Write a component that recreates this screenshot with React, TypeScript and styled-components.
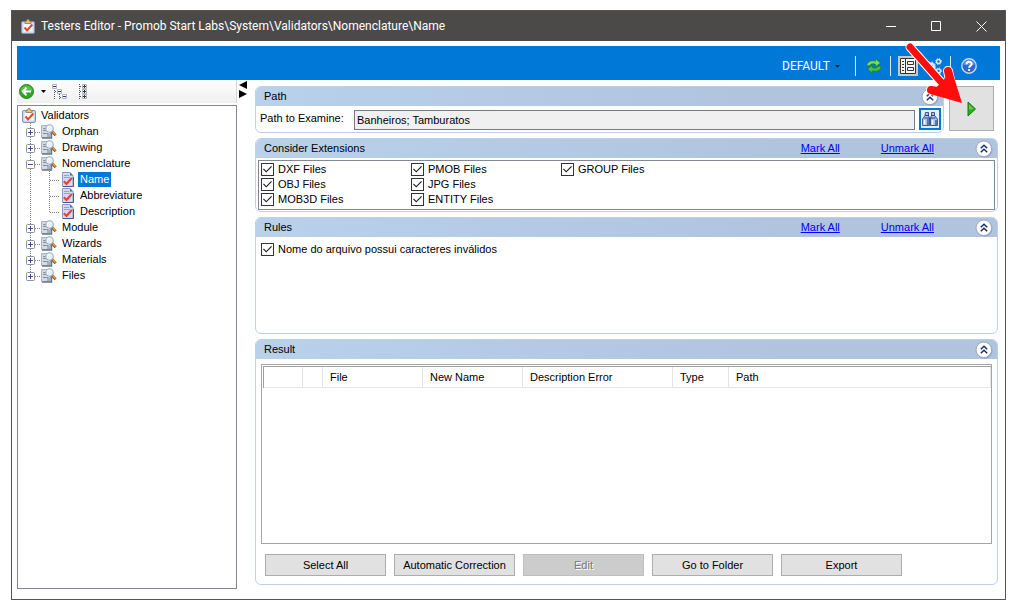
import React from "react";
import styled, { createGlobalStyle } from "styled-components";

const GlobalStyle = createGlobalStyle`
  * { box-sizing: border-box; }
  html, body { margin: 0; background: #fff; }
  body, button, input, select, table {
    font-family: "Liberation Sans", Arial, sans-serif;
    font-size: 11px;
    line-height: 15px;
    color: #000;
  }
  button { padding: 0; border: 0; background: none; }
  svg { display: block; flex: none; }
`;

const Page = styled.div`
  display: flex;
  min-height: 100vh;
  padding: 10px 19px 14px 11px;
`;

const Window = styled.main`
  position: relative;
  flex: 1;
  min-width: 0;
  display: flex;
  flex-direction: column;
  border: 1px solid #555;
  background: #fff;
`;

const TitleBar = styled.header`
  display: flex;
  align-items: center;
  height: 30px;
  padding: 0 15px 0 9px;
  gap: 6px;
  background: #4c4a48;
`;

const Title = styled.h1`
  flex: 1;
  margin: 0;
  font: 400 12px/16px Roboto, sans-serif;
  color: #fff;
  white-space: nowrap;
`;

const WindowControls = styled.div`
  display: flex;
  gap: 27px;
`;

const WindowButton = styled.button`
  display: grid;
  place-items: center;
  width: 18px;
  height: 20px;
`;

const Client = styled.div`
  flex: 1;
  display: flex;
  flex-direction: column;
  padding: 5px;
`;

const TopBar = styled.div`
  display: flex;
  align-items: center;
  justify-content: flex-end;
  height: 34px;
  padding: 6px 23px 0 0;
  background: #0078d7;
`;

const Profile = styled.label`
  display: flex;
  align-items: center;
  gap: 5px;
  margin-right: 7px;
`;

const ProfileSelect = styled.select`
  appearance: none;
  padding: 0;
  border: 0;
  background: transparent;
  font: 400 12px/16px Roboto, sans-serif;
  color: #fff;
`;

const Separator = styled.span<{ $after: number }>`
  width: 1px;
  height: 20px;
  margin: 0 ${(p) => p.$after}px 0 8px;
  background: #d5e8f8;
`;

const ToolButton = styled.button`
  display: grid;
  place-items: center;
  width: 16px;
  height: 20px;
`;

const PressedToolButton = styled(ToolButton)`
  width: 20px;
  margin-right: 8px;
  background: #c9c9c9;
`;

const Workspace = styled.div`
  flex: 1;
  display: flex;
`;

const Sidebar = styled.aside`
  flex: none;
  width: 220px;
  display: flex;
  flex-direction: column;
  padding-bottom: 5px;
`;

const SideTools = styled.div`
  display: flex;
  align-items: center;
  height: 23px;
  margin-bottom: 2px;
  padding-left: 2px;
  background: linear-gradient(#fdfdfd, #f0f0f0);
  border-right: 1px solid #d4d4d4;
`;

const SideButton = styled.button<{ $space?: number }>`
  margin-right: ${(p) => p.$space ?? 0}px;
`;

const Tree = styled.ul`
  flex: 1;
  margin: 0;
  padding: 1px 0;
  border: 1px solid #828790;
  list-style: none;
`;

const TreeRow = styled.li<{ $root?: boolean }>`
  display: flex;
  align-items: center;
  height: 16px;
  padding-left: ${(p) => (p.$root ? 4 : 0)}px;
`;

const TreeLabel = styled.span<{ $selected?: boolean }>`
  margin-left: 3px;
  padding: 0 2px;
  color: ${(p) => (p.$selected ? "#fff" : "#000")};
  background: ${(p) => (p.$selected ? "#0078d7" : "transparent")};
`;

const Splitter = styled.div`
  flex: none;
  width: 18px;
  padding: 1px 0 0 2px;
`;

const Main = styled.section`
  flex: 1;
  min-width: 0;
  display: flex;
  flex-direction: column;
  gap: 5px;
  padding: 6px 2px 9px 0;
`;

const PathRow = styled.div`
  display: flex;
  align-items: flex-start;
  gap: 5px;
  padding-right: 4px;
`;

const Panel = styled.section<{ $grow?: boolean; $min?: number }>`
  flex: ${(p) => (p.$grow ? "1" : "none")};
  min-width: 0;
  min-height: ${(p) => p.$min ?? 0}px;
  display: flex;
  flex-direction: column;
  border: 1px solid #b9d1ea;
  border-radius: 6px;
`;

const PanelHeader = styled.header`
  display: flex;
  align-items: center;
  height: 19px;
  padding: 0 4px 0 8px;
  border-radius: 5px 5px 0 0;
  background: linear-gradient(90deg, #b9d1ea, #b0c4de 70%);
`;

const PanelTitle = styled.h2`
  flex: 1;
  margin: 0;
  font-size: 11px;
  line-height: 15px;
  padding-bottom: 1px;
  font-weight: 400;
`;

const HeaderLink = styled.a`
  margin-right: 41px;
  padding-bottom: 1px;
  color: #00f;
  text-decoration: underline;
`;

const PathBody = styled.div`
  display: flex;
  align-items: center;
  gap: 4px;
  padding: 1px 2px 2px 4px;
`;

const PathLabel = styled.label`
  width: 90px;
`;

const PathInput = styled.input`
  flex: 1;
  min-width: 0;
  height: 20px;
  margin-top: 3px;
  padding: 0 2px;
  border: 1px solid #7a7a7a;
  background: #f0f0f0;
`;

const FindButton = styled.button`
  display: grid;
  place-items: center;
  width: 22px;
  height: 22px;
  border: 2px solid #0078d7;
  background: #e5eef7;
`;

const RunButton = styled.button`
  display: grid;
  place-items: center;
  width: 45px;
  height: 45px;
  border: 1px solid #adadad;
  background: #e1e1e1;
`;

const CheckList = styled.div`
  display: grid;
  grid-auto-flow: column;
  grid-template-rows: repeat(3, 15px);
  grid-auto-columns: 150px;
  margin: 2px 2px 1px;
  padding: 1px 2px 2px;
  border: 1px solid #828790;
`;

const RuleList = styled.div`
  padding: 5px;
`;

const CheckLabel = styled.label`
  display: flex;
  align-items: center;
  gap: 4px;
`;

const CheckBox = styled.input`
  appearance: none;
  display: grid;
  place-items: center;
  width: 13px;
  height: 13px;
  margin: 0;
  border: 1px solid #333;
  background: #fff;

  &:checked::before {
    content: "";
    width: 9px;
    height: 7px;
    background: #222;
    clip-path: polygon(0 46%, 10% 36%, 36% 70%, 90% 0, 100% 10%, 36% 92%);
  }
`;

const ResultBody = styled.div`
  flex: 1;
  display: flex;
  flex-direction: column;
  gap: 10px;
  padding: 5px 5px 8px;
`;

const ResultList = styled.div`
  flex: 1;
  padding: 1px 0 0 1px;
  border: 1px solid #a5a5a5;
`;

const ResultTable = styled.table`
  width: 100%;
  table-layout: fixed;
  border-collapse: separate;
  border-spacing: 0;
  border-top: 1px solid #a0a0a0;
  border-left: 1px solid #a0a0a0;
`;

const HeadCell = styled.th<{ $width?: number }>`
  width: ${(p) => (p.$width ? `${p.$width}px` : "auto")};
  height: 21px;
  padding: 0 7px;
  border-right: 1px solid #e5e5e5;
  border-bottom: 1px solid #e5e5e5;
  font-weight: 400;
  text-align: left;
  white-space: nowrap;
`;

const Actions = styled.div`
  display: flex;
  gap: 8px;
  padding-left: 4px;
`;

const ActionButton = styled.button`
  width: 121px;
  height: 22px;
  border: 1px solid #adadad;
  background: #e1e1e1;
  white-space: nowrap;

  &:disabled {
    border-color: #bfbfbf;
    background: #ccc;
    color: #777;
    text-shadow: 1px 1px 0 #fff;
  }
`;

const Pointer = styled.svg`
  position: absolute;
  top: 30px;
  right: 40px;
  pointer-events: none;
`;

/* ---------- icons ---------- */

const ClipboardIcon = () => (
  <svg width="14" height="15" viewBox="0 0 14 15">
    <rect x=".5" y="2.500" width="13" height="12" rx="1.500" fill="#c9d6f0" stroke="#7f93bd" />
    <path d="M2.500 4.500h9v8h-9z" fill="#f6f9ff" />
    <path d="M4 4.500V2.300h1.500L6 .6h2l.5 1.700H10v2.200z" fill="#e3c57c" stroke="#8f7a45" strokeWidth=".8" />
    <path d="M3.500 8.500 6 11.500 11.300 5.500" fill="none" stroke="#e04a28" strokeWidth="2" />
  </svg>
);

const PageCheckIcon = () => (
  <svg width="14" height="15" viewBox="0 0 14 15">
    <path d="M1.500.5h7.500l3 3v11H1.500z" fill="#cfdcf3" stroke="#8a9cc4" />
    <path d="M9 .5v3h3z" fill="#4e6599" />
    <path d="M3 3.500h5M3 5.500h6" stroke="#8fa3cf" />
    <path d="M2 14.500h10.500V5" fill="none" stroke="#45598a" />
    <path d="M2.800 9.300 5.500 12 10.800 6" fill="none" stroke="#e0482b" strokeWidth="2.200" />
  </svg>
);

const SearchPageIcon = () => (
  <svg width="16" height="15" viewBox="0 0 16 15">
    <path d="M.5 1.500h9v12h-9z" fill="#d3dae2" stroke="#a9b4c0" />
    <path d="M2 4.500h3M2 6.500h3M2 9.500h5" stroke="#8592a2" />
    <path d="M1 14h9.500V8.500" fill="none" stroke="#66758a" strokeWidth="1.400" />
    <path d="M6 13V9.500h4V13z" fill="#a3afbd" />
    <path d="m11 7.500 3.700 3.700" stroke="#8f5a1c" strokeWidth="2.800" />
    <path d="m12 8 2.500 2.500" stroke="#f0a83e" strokeWidth="1.200" />
    <circle cx="8.500" cy="4.500" r="3.700" fill="#e6f3fd" stroke="#9aabbb" strokeWidth="1.100" />
    <path d="M6.500 4.500a2 2 0 0 1 2-2" fill="none" stroke="#fff" />
  </svg>
);

const Expander = ({ open, last }: { open?: boolean; last?: boolean }) => (
  <svg width="23" height="16" viewBox="0 0 23 16">
    <path d={last ? "M12.500 0v8" : "M12.500 0v16"} stroke="#808080" strokeDasharray="1 1" />
    <path d="M17 9.500h6" stroke="#808080" strokeDasharray="1 1" />
    <rect x="8.500" y="5.500" width="8" height="8" rx="1" fill="#fff" stroke="#919191" />
    <path d={open ? "M10 9.500h5" : "M10 9.500h5M12.500 7v5"} stroke="#354f8e" />
  </svg>
);

const ChildBranch = ({ last }: { last?: boolean }) => (
  <svg width="43" height="16" viewBox="0 0 43 16">
    <path d="M12.500 0v16" stroke="#808080" strokeDasharray="1 1" />
    <path d={last ? "M31.500 0v9" : "M31.500 0v16"} stroke="#808080" strokeDasharray="1 1" />
    <path d="M32 9.500h10" stroke="#808080" strokeDasharray="1 1" />
  </svg>
);

const BackIcon = () => (
  <svg width="16" height="16" viewBox="0 0 16 16">
    <circle cx="7.500" cy="7.500" r="7" fill="#2fa525" stroke="#2b8a22" />
    <path d="M1.500 7a6 5.500 0 0 1 12 0z" fill="#8bd97c" opacity=".5" />
    <path d="M12 7.500H4.500M7.500 3.800 3.800 7.500l3.700 3.700" fill="none" stroke="#fff" strokeWidth="2" />
  </svg>
);

const Caret = ({ color = "#000" }: { color?: string }) => (
  <svg width="5" height="3" viewBox="0 0 5 3">
    <path d="M0 0h5L2.500 3z" fill={color} />
  </svg>
);

const CollapseTreeIcon = () => (
  <svg width="16" height="16" viewBox="0 0 16 16" fill="none">
    <path d="M2.500 6v9M7.500 10v5M3 7.500h2M8 13.500h2" stroke="#555" strokeDasharray="1 1" />
    <path d="M.5.5h4v4h-4zM5.500 5.500h4v4h-4zM10.500 10.500h4v4h-4z" fill="#fff" stroke="#a9b5c1" />
    <path d="M1 2.500h3M6 7.500h3M11 12.500h3" stroke="#273d68" />
  </svg>
);

const ExpandTreeIcon = () => (
  <svg width="10" height="16" viewBox="0 0 10 16" fill="none">
    <path d="M1.500 0v16M2 2.500h2M2 7.500h2M2 12.500h2" stroke="#555" strokeDasharray="1 1" />
    <path d="M4.500.5h4v4h-4zM4.500 5.500h4v4h-4zM4.500 10.500h4v4h-4z" fill="#fff" stroke="#a9b5c1" />
    <path d="M5 2.500h3M5 7.500h3M5 12.500h3M6.500 1v3M6.500 6v3M6.500 11v3" stroke="#333" />
  </svg>
);

const RefreshIcon = () => (
  <svg width="16" height="16" viewBox="0 0 16 16" stroke="#1b7d2a" strokeWidth=".7">
    <path d="M.6 7.500C1.500 3.500 5.500 2 9.500 3.200V.8l5 4.200-5 3.700V6.300C6.800 5.400 4.800 5.800 3.600 7.800z" fill="#7ed957" />
    <path d="M15.400 8.500c-.9 4-4.900 5.500-8.900 4.300v2.400l-5-4.200 5-3.700v2.400c2.700.9 4.700.5 5.900-1.500z" fill="#4cc23a" />
  </svg>
);

const FormIcon = () => (
  <svg width="16" height="16" viewBox="0 0 16 16" fill="none" stroke="#333">
    <path d="M.5.5h15v15H.5z" fill="#f5f5f5" />
    <path d="M5.500 1v14M2 3.500h2M2 6.500h2M2 9.500h2M2 12.500h2" />
    <path d="M7.500 3.500h6v3h-6zM7.500 9.500h6v3h-6z" />
  </svg>
);

const GearsIcon = () => (
  <svg width="17" height="17" viewBox="0 0 17 17" fill="none" stroke="#dceafa">
    <circle cx="5" cy="8.500" r="3" strokeWidth="2" />
    <circle cx="5" cy="8.500" r="4.500" strokeDasharray="2 1.500" />
    <circle cx="12.500" cy="3.500" r="2" strokeWidth="1.400" />
    <circle cx="12.500" cy="3.500" r="3" strokeDasharray="1 1.400" />
    <circle cx="12.500" cy="13" r="2" strokeWidth="1.400" />
    <circle cx="12.500" cy="13" r="3" strokeDasharray="1 1.400" />
  </svg>
);

const HelpIcon = () => (
  <svg width="16" height="16" viewBox="0 0 16 16" fill="none">
    <circle cx="8" cy="8" r="7.200" fill="#2f66cf" stroke="#c9dcf8" strokeWidth="1.400" />
    <path d="M2.500 7a5.500 5 0 0 1 11 0z" fill="#7fa8ee" opacity=".6" />
    <path d="M5.500 6.300C5.500 3 10.700 3 10.700 6.100c0 1.800-2.600 1.800-2.600 3.700M8.100 10.900V13" stroke="#fff" strokeWidth="1.900" />
  </svg>
);

const ChevronsIcon = () => (
  <svg width="18" height="18" viewBox="0 0 18 18" fill="none">
    <circle cx="9.500" cy="9.500" r="8" fill="#8592a9" opacity=".6" />
    <circle cx="8.800" cy="8.800" r="7.800" fill="#fff" stroke="#9aa6ba" />
    <path d="M5.800 8.300 9 5.200l3.200 3.100M5.800 12.300 9 9.200l3.200 3.100" stroke="#17306e" strokeWidth="1.500" />
  </svg>
);

const BinocularsIcon = () => (
  <svg width="16" height="14" viewBox="0 0 16 14" stroke="#294b86" strokeWidth=".9">
    <path d="M3.500.5h3v3l1 2.500v7.500H.6V7l2.400-3.500zM9.500.5h3v3L15.400 7v6.500H8.500V6l1-2.500z" fill="#a9c5ee" />
    <path d="M3 3.500h4M9 3.500h4M2.500 6h5M8.500 6h5" stroke="#17366f" />
    <path d="M2.500 8v4.500M10.500 8v4.500" stroke="#fff" strokeWidth="1.400" />
    <path d="M6 7v6M14 8v5" stroke="#3b62a5" strokeWidth="1.500" />
  </svg>
);

const PlayIcon = () => (
  <svg width="9" height="16" viewBox="0 0 9 16">
    <path d="M1 1v14l7.500-7z" fill="#2fab1e" stroke="#187611" />
    <path d="M2 3.500v5L6.500 8z" fill="#67cf4e" />
  </svg>
);

const SplitArrows = () => (
  <svg width="9" height="17" viewBox="0 0 9 17">
    <path d="M8 0v8L0 4zM0 9v8l8-4z" />
  </svg>
);

/* ---------- content ---------- */

type Node = { label: string; open?: boolean; children?: string[] };

const nodes: Node[] = [
  { label: "Orphan" },
  { label: "Drawing" },
  { label: "Nomenclature", open: true, children: ["Name", "Abbreviature", "Description"] },
  { label: "Module" },
  { label: "Wizards" },
  { label: "Materials" },
  { label: "Files" },
];

const extensions = [
  "DXF Files",
  "OBJ Files",
  "MOB3D Files",
  "PMOB Files",
  "JPG Files",
  "ENTITY Files",
  "GROUP Files",
];

const columns: { label: string; width?: number }[] = [
  { label: "", width: 39 },
  { label: "", width: 20 },
  { label: "File", width: 100 },
  { label: "New Name", width: 100 },
  { label: "Description Error", width: 150 },
  { label: "Type", width: 56 },
  { label: "Path" },
];

const Header = ({ title, links }: { title: string; links?: boolean }) => (
  <PanelHeader>
    <PanelTitle>{title}</PanelTitle>
    {links && <HeaderLink href="#mark">Mark All</HeaderLink>}
    {links && <HeaderLink href="#unmark">Unmark All</HeaderLink>}
    <button aria-label={`Collapse ${title}`}>
      <ChevronsIcon />
    </button>
  </PanelHeader>
);

const Check = ({ label }: { label: string }) => (
  <CheckLabel>
    <CheckBox type="checkbox" defaultChecked />
    {label}
  </CheckLabel>
);

export default function App() {
  return (
    <Page>
      <GlobalStyle />
      <Window>
        <TitleBar>
          <ClipboardIcon />
          <Title>Testers Editor - Promob Start Labs\System\Validators\Nomenclature\Name</Title>
          <WindowControls>
            <WindowButton aria-label="Minimize">
              <svg width="11" height="11"><path d="M0 5.500h10" stroke="#fff" /></svg>
            </WindowButton>
            <WindowButton aria-label="Maximize">
              <svg width="11" height="11"><path d="M.5.5h9v9h-9z" fill="none" stroke="#fff" /></svg>
            </WindowButton>
            <WindowButton aria-label="Close">
              <svg width="11" height="11"><path d="m.5.5 10 10m0-10-10 10" stroke="#fff" /></svg>
            </WindowButton>
          </WindowControls>
        </TitleBar>
        <Client>
          <TopBar>
            <Profile>
              <ProfileSelect aria-label="Profile"><option>DEFAULT</option></ProfileSelect>
              <Caret color="#0b2540" />
            </Profile>
            <Separator $after={10} />
            <ToolButton aria-label="Refresh"><RefreshIcon /></ToolButton>
            <Separator $after={7} />
            <PressedToolButton aria-label="Form view"><FormIcon /></PressedToolButton>
            <ToolButton aria-label="Settings"><GearsIcon /></ToolButton>
            <Separator $after={10} />
            <ToolButton aria-label="Help"><HelpIcon /></ToolButton>
          </TopBar>
          <Workspace>
            <Sidebar>
              <SideTools>
                <SideButton aria-label="Back" $space={6}><BackIcon /></SideButton>
                <SideButton aria-label="History" $space={6}><Caret /></SideButton>
                <SideButton aria-label="Collapse tree" $space={10}><CollapseTreeIcon /></SideButton>
                <SideButton aria-label="Expand tree"><ExpandTreeIcon /></SideButton>
              </SideTools>
              <Tree>
                <TreeRow $root>
                  <ClipboardIcon />
                  <TreeLabel>Validators</TreeLabel>
                </TreeRow>
                {nodes.map((node, i) => (
                  <React.Fragment key={node.label}>
                    <TreeRow>
                      <button aria-label={`Toggle ${node.label}`}>
                        <Expander open={node.open} last={i === nodes.length - 1} />
                      </button>
                      <SearchPageIcon />
                      <TreeLabel>{node.label}</TreeLabel>
                    </TreeRow>
                    {node.children?.map((child, k, all) => (
                      <TreeRow key={child}>
                        <ChildBranch last={k === all.length - 1} />
                        <PageCheckIcon />
                        <TreeLabel $selected={child === "Name"}>{child}</TreeLabel>
                      </TreeRow>
                    ))}
                  </React.Fragment>
                ))}
              </Tree>
            </Sidebar>
            <Splitter><SplitArrows /></Splitter>
            <Main>
              <PathRow>
                <Panel $grow>
                  <Header title="Path" />
                  <PathBody>
                    <PathLabel htmlFor="path">Path to Examine:</PathLabel>
                    <PathInput id="path" readOnly value="Banheiros; Tamburatos" />
                    <FindButton aria-label="Browse"><BinocularsIcon /></FindButton>
                  </PathBody>
                </Panel>
                <RunButton aria-label="Run"><PlayIcon /></RunButton>
              </PathRow>
              <Panel>
                <Header title="Consider Extensions" links />
                <CheckList>
                  {extensions.map((name) => <Check key={name} label={name} />)}
                </CheckList>
              </Panel>
              <Panel $min={117}>
                <Header title="Rules" links />
                <RuleList>
                  <Check label="Nome do arquivo possui caracteres inválidos" />
                </RuleList>
              </Panel>
              <Panel $grow>
                <Header title="Result" />
                <ResultBody>
                  <ResultList>
                    <ResultTable>
                      <thead>
                        <tr>
                          {columns.map((col, i) => (
                            <HeadCell key={i} $width={col.width}>{col.label}</HeadCell>
                          ))}
                        </tr>
                      </thead>
                    </ResultTable>
                  </ResultList>
                  <Actions>
                    <ActionButton>Select All</ActionButton>
                    <ActionButton>Automatic Correction</ActionButton>
                    <ActionButton disabled>Edit</ActionButton>
                    <ActionButton>Go to Folder</ActionButton>
                    <ActionButton>Export</ActionButton>
                  </Actions>
                </ResultBody>
              </Panel>
            </Main>
          </Workspace>
        </Client>
        <Pointer width="62" height="66" viewBox="0 0 62 66" aria-hidden="true">
          <g fill="none" stroke="#fff" strokeLinecap="round" strokeLinejoin="round">
            <path d="M7 6 46 50" strokeWidth="9" />
            <path d="M45 30 50 52 28 49" strokeWidth="10" />
          </g>
          <path d="M59 62 49 30 27 53z" fill="#ff0d0d" />
          <g fill="none" stroke="#ff0d0d" strokeLinecap="round" strokeLinejoin="round">
            <path d="M7 6 46 50" strokeWidth="7" />
            <path d="M45 30 50 52 28 49" strokeWidth="8" />
          </g>
        </Pointer>
      </Window>
    </Page>
  );
}
